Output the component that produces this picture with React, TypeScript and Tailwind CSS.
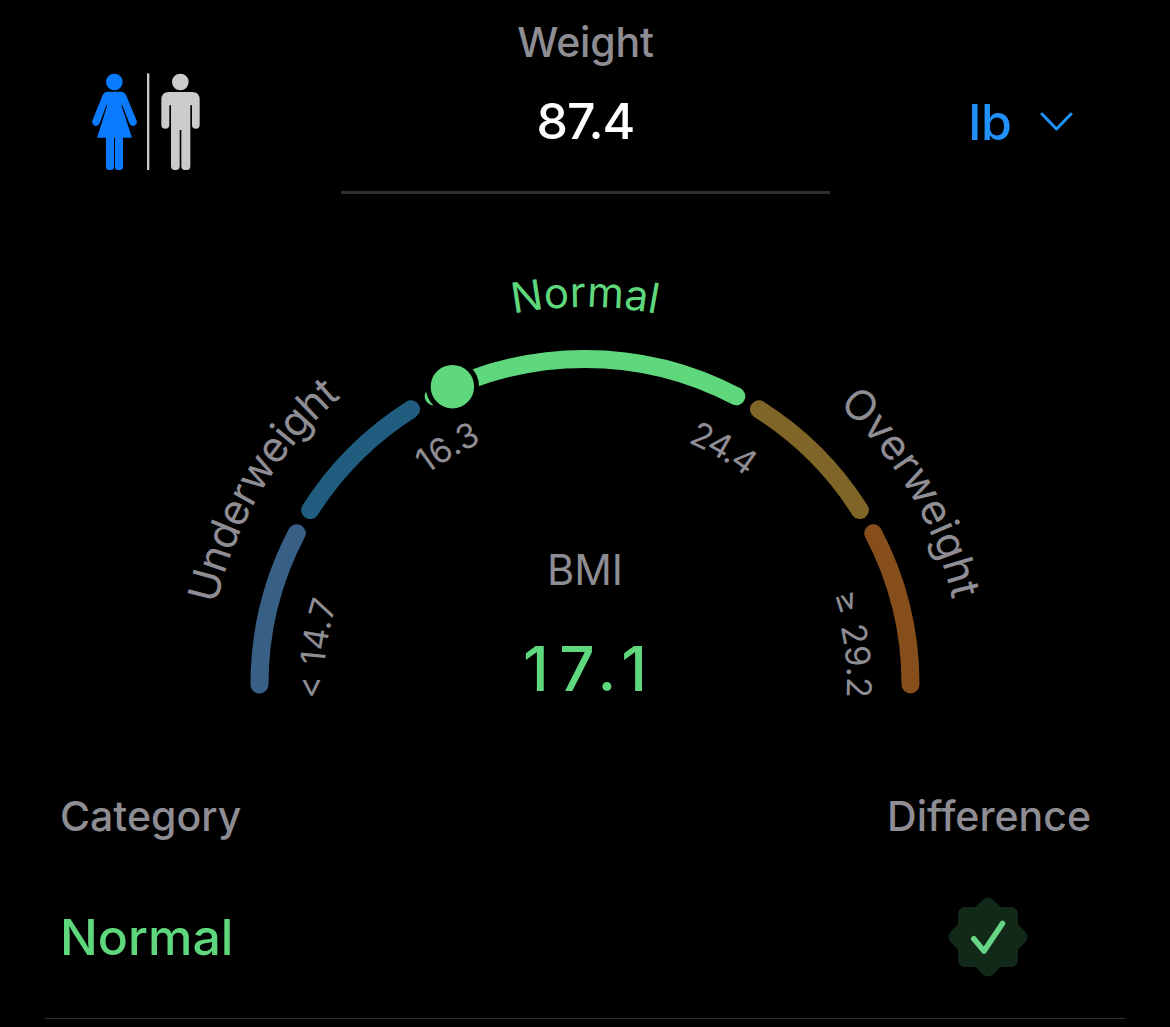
import { useState } from "react";

const CX = 585;
const CY = 684.5;
const RADIUS = 325.5;

// degrees are measured clockwise from the left end of the gauge
const point = (deg: number, r: number) => {
    const a = (deg * Math.PI) / 180;
    return [CX - r * Math.cos(a), CY - r * Math.sin(a)];
};

const arc = (from: number, to: number, r: number = RADIUS) => {
    const [x1, y1] = point(from, r);
    const [x2, y2] = point(to, r);
    return `M${x1.toFixed(2)} ${y1.toFixed(2)}A${r} ${r} 0 0 1 ${x2.toFixed(2)} ${y2.toFixed(2)}`;
};

const segments = [
    { from: 0, to: 27.7, color: "#385f86" },
    { from: 32.4, to: 57.7, color: "#215d7f" },
    { from: 62.3, to: 117.7, color: "#5fd77d" },
    { from: 122.3, to: 147.6, color: "#7f6527" },
    { from: 152.3, to: 180, color: "#854e1b" },
];

const labels = [
    { id: "under", text: "Underweight", at: 31, r: 377, size: 42, length: 246, color: "#8e8d93" },
    { id: "normal", text: "Normal", at: 90, r: 377.5, size: 42, length: 144, color: "#5fd77d" },
    { id: "over", text: "Overweight", at: 149.6, r: 377, size: 42, length: 229, color: "#8e8d93" },
    { id: "l147", text: "< 14.7", at: 7.6, r: 261, size: 34, length: 97, color: "#8e8d93" },
    { id: "l163", text: "16.3", at: 59.9, r: 263, size: 34, length: 64, color: "#8e8d93" },
    { id: "l244", text: "24.4", at: 120.4, r: 263, size: 34, length: 68, color: "#8e8d93" },
    { id: "l292", text: "≥ 29.2", at: 171.5, r: 262, size: 34, length: 104, color: "#8e8d93" },
];

function SexToggle() {
    const [female, setFemale] = useState(true);

    return (
        <button onClick={() => setFemale(!female)} aria-label="Sex">
            <svg width="108" height="98" viewBox="66 69 324 294">
                <g fill={female ? "#0a7aff" : "#cbcbcb"}>
                    <circle cx="133" cy="96" r="25" />
                    <path d="M113 125H153Q164 125 169 137L200 212Q203 222 193 227Q183 230 178 220L157 166H154L186 263H159V351Q159 360 150 360H144Q135 360 135 351V263H132V351Q132 360 123 360H117Q108 360 108 351V263H81L112 166H109L89 220Q84 230 74 227Q64 222 67 212L97 137Q102 125 113 125Z" />
                </g>
                <path d="M231 70H238V360H231Z" fill="#cbcbcb" />
                <g fill={female ? "#cbcbcb" : "#0a7aff"}>
                    <circle cx="331" cy="96" r="25" />
                    <path d="M296 126H367Q389 126 389 150V225Q389 236 377 236Q366 236 366 225V166H361V349Q361 360 350 360H345Q334 360 334 349V240H329V349Q329 360 318 360H314Q303 360 303 349V166H298V225Q298 236 286 236Q274 236 274 225V150Q274 126 296 126Z" />
                </g>
            </svg>
        </button>
    );
}

function Gauge() {
    const [kx, ky] = point(66, 326);

    return (
        <svg width="1170" height="520" viewBox="0 240 1170 520" className="block">
            {segments.map((s) => (
                <path key={s.from} d={arc(s.from, s.to)} fill="none" stroke={s.color} strokeWidth="18" strokeLinecap="round" />
            ))}
            <circle cx={kx} cy={ky} r="24.2" fill="#5fd77d" stroke="#000" strokeWidth="5" />

            {labels.map((l) => (
                <g key={l.id}>
                    <path id={l.id} d={arc(l.at - 45, l.at + 45, l.r)} fill="none" />
                    <text fontSize={l.size} fill={l.color} textAnchor="middle" textLength={l.length}>
                        <textPath href={`#${l.id}`} startOffset="50%" textLength={l.length}>
                            {l.text}
                        </textPath>
                    </text>
                </g>
            ))}

            <text x="585" y="585" fontSize="42" fill="#8e8d93" textAnchor="middle" textLength="76" lengthAdjust="spacingAndGlyphs">
                BMI
            </text>
            <text x="585" y="691" fontSize="62" fontWeight="500" fill="#5fd77d" textAnchor="middle" textLength="124">
                17.1
            </text>
        </svg>
    );
}

function CheckBadge() {
    return (
        <svg width="80" height="80" viewBox="-40 -40 80 80">
            <g fill="#12291a">
                <rect x="-30" y="-30" width="60" height="60" rx="7" />
                <rect x="-30" y="-30" width="60" height="60" rx="7" transform="rotate(45)" />
            </g>
            <path d="M-14.2 1.8L-4 14L14.5-13.5" fill="none" stroke="#67d585" strokeWidth="5.6" strokeLinecap="round" strokeLinejoin="round" />
        </svg>
    );
}

function App() {
    return (
        <div className="w-[1170px] h-[1027px] overflow-hidden bg-black text-[#8e8d93] font-['Inter',sans-serif]">
            <div className="flex h-[240px] justify-between pl-[92px] pr-[97px]">
                <div className="w-[249px] pt-[73px]">
                    <SexToggle />
                </div>

                <div className="flex h-[194px] w-[489px] flex-col items-center border-b-[3px] border-[#2f2f31] pt-[17px]">
                    <p className="text-[41px] leading-[50px] font-medium tracking-[-0.2px]">Weight</p>
                    <p className="mt-[24px] text-[50px] leading-[60px] font-medium tracking-[-1px] text-white">87.4</p>
                </div>

                <button className="flex h-[60px] w-[243px] items-center justify-end gap-[28px] mt-[92px] text-[#2191fb]">
                    <span className="text-[50px] leading-[60px] font-medium">lb</span>
                    <svg width="33" height="20" viewBox="0 0 33 20">
                        <path d="M2 2L16.5 17L31 2" fill="none" stroke="currentColor" strokeWidth="3" strokeLinecap="round" strokeLinejoin="round" />
                    </svg>
                </button>
            </div>

            <Gauge />

            <div className="mx-[45px] h-[259px] border-b border-[#333335] px-[15px] pt-[31px]">
                <div className="flex justify-between pr-[19px] text-[41px] leading-[50px] font-medium">
                    <p>Category</p>
                    <p>Difference</p>
                </div>
                <div className="flex items-center justify-between mt-[56px] pr-[82px]">
                    <p className="text-[50px] leading-[60px] font-medium text-[#5fd77d]">Normal</p>
                    <CheckBadge />
                </div>
            </div>
        </div>
    );
}

export default App;
